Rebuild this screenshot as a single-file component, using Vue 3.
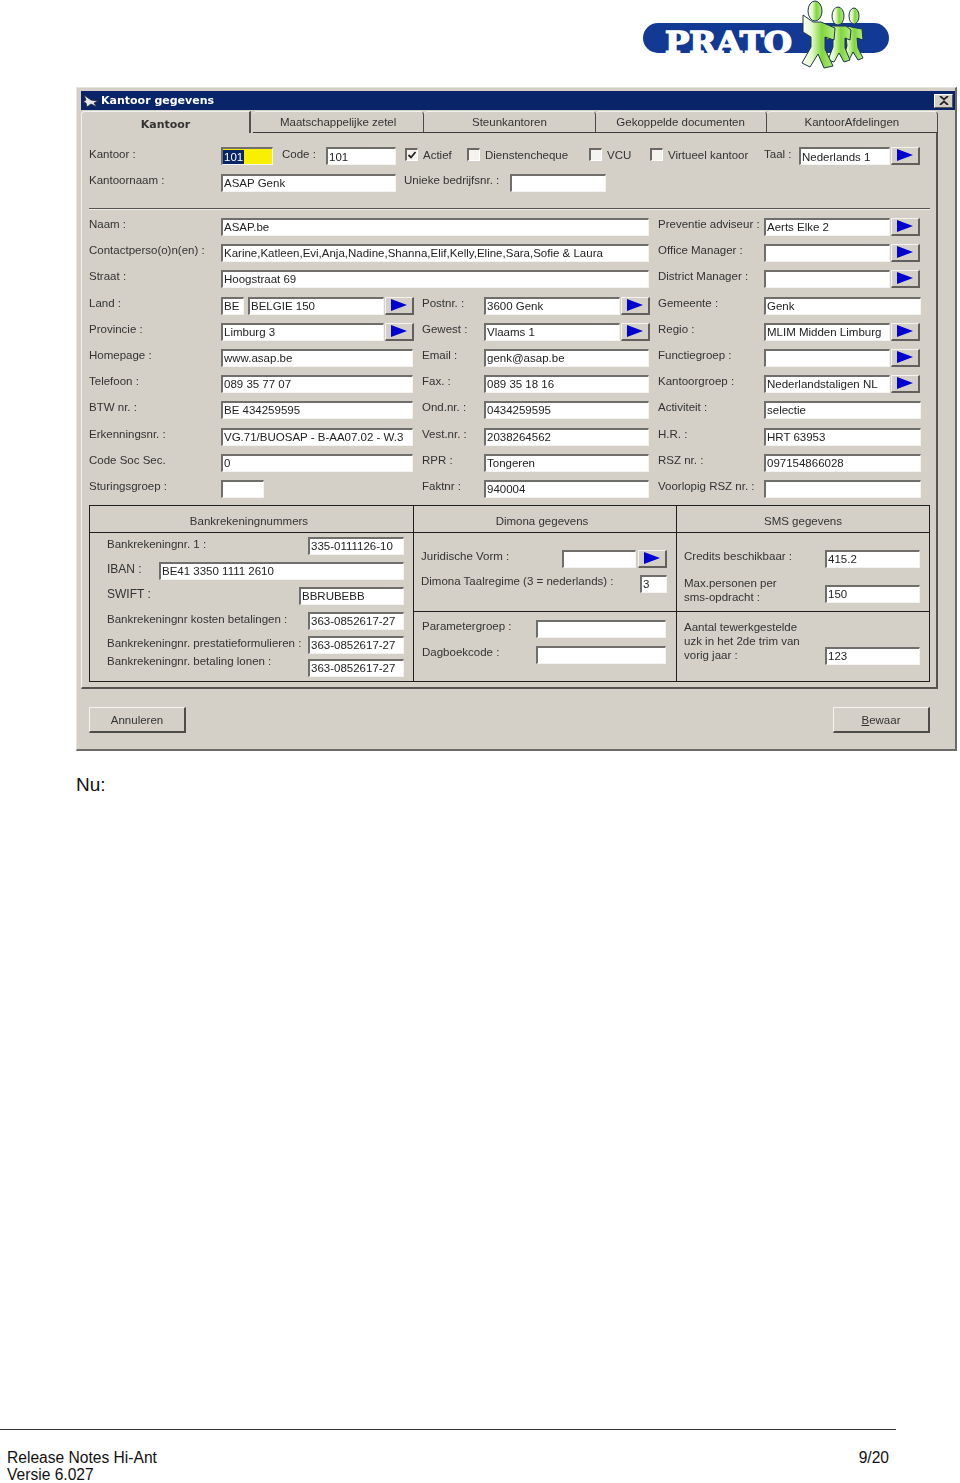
<script setup>
const tabs = ['Maatschappelijke zetel', 'Steunkantoren', 'Gekoppelde documenten', 'KantoorAfdelingen']

const checks = [
  { text: 'Actief', width: 62, on: true },
  { text: 'Dienstencheque', width: 122 },
  { text: 'VCU', width: 61 },
  { text: 'Virtueel kantoor', width: 114 },
]

const mainRows = [
  { a: 'Naam :', v: 'ASAP.be', w: 428, c: 'Preventie adviseur :', cv: 'Aerts Elke 2', arrow: true },
  { a: 'Contactperso(o)n(en) :', v: 'Karine,Katleen,Evi,Anja,Nadine,Shanna,Elif,Kelly,Eline,Sara,Sofie & Laura', w: 428, c: 'Office Manager :', cv: '', arrow: true },
  { a: 'Straat :', v: 'Hoogstraat 69', w: 428, c: 'District Manager :', cv: '', arrow: true },
  { a: 'Land :', land: true, b: 'Postnr. :', bv: '3600 Genk', barrow: true, c: 'Gemeente :', cv: 'Genk' },
  { a: 'Provincie :', v: 'Limburg 3', w: 163, varrow: true, b: 'Gewest :', bv: 'Vlaams 1', barrow: true, c: 'Regio :', cv: 'MLIM Midden Limburg', arrow: true },
  { a: 'Homepage :', v: 'www.asap.be', w: 192, b: 'Email :', bv: 'genk@asap.be', c: 'Functiegroep :', cv: '', arrow: true },
  { a: 'Telefoon :', v: '089 35 77 07', w: 192, b: 'Fax. :', bv: '089 35 18 16', c: 'Kantoorgroep :', cv: 'Nederlandstaligen NL', arrow: true },
  { a: 'BTW nr. :', v: 'BE 434259595', w: 192, b: 'Ond.nr. :', bv: '0434259595', c: 'Activiteit :', cv: 'selectie' },
  { a: 'Erkenningsnr. :', v: 'VG.71/BUOSAP - B-AA07.02 - W.3', w: 192, b: 'Vest.nr. :', bv: '2038264562', c: 'H.R. :', cv: 'HRT 63953' },
  { a: 'Code Soc Sec.', v: '0', w: 192, b: 'RPR :', bv: 'Tongeren', c: 'RSZ nr. :', cv: '097154866028' },
  { a: 'Sturingsgroep :', v: '', w: 43, b: 'Faktnr :', bv: '940004', c: 'Voorlopig RSZ nr. :', cv: '' },
]

const bankRows = [
  { label: 'Bankrekeningnr. 1 :', value: '335-0111126-10', width: 96, gap: 7 },
  { label: 'IBAN :', value: 'BE41 3350 1111 2610', width: 245, gap: 7, large: true },
  { label: 'SWIFT :', value: 'BBRUBEBB', width: 105, gap: 7, large: true },
  { label: 'Bankrekeningnr kosten betalingen :', value: '363-0852617-27', width: 96, gap: 6 },
  { label: 'Bankrekeningnr. prestatieformulieren :', value: '363-0852617-27', width: 96, gap: 5 },
  { label: 'Bankrekeningnr. betaling lonen :', value: '363-0852617-27', width: 96, gap: 0, raised: true },
]
</script>

<template>
  <div class="page">
    <header class="logo-row">
      <svg class="logo" width="248" height="70" viewBox="642 0 248 70" role="img" aria-label="Prato">
        <defs>
          <linearGradient id="paper" x1="0" x2="1" y1="0" y2="0">
            <stop offset="0" stop-color="#ffffff" />
            <stop offset=".3" stop-color="#e4f8c8" />
            <stop offset=".6" stop-color="#7fd63c" />
            <stop offset="1" stop-color="#b6ec84" />
          </linearGradient>
        </defs>
        <rect x="643" y="23" width="246" height="30" rx="15" fill="#123a94" />
        <text x="665" y="53" class="logo-text" textLength="127" lengthAdjust="spacingAndGlyphs">PRATO</text>
        <g fill="url(#paper)" stroke="#1d3550" stroke-width="1">
          <path d="M846 26l16 3 1 11-6-2 1 10 5 10-5 2-5-8-4 8-6-2 4-12-1-10-5 2 0-11z" />
          <ellipse cx="854" cy="16" rx="5" ry="8" />
          <path d="M826 26h20l5 4-1 10-5-2 0 10 5 12-6 2-5-9-5 9-6-2 5-13v-9l-6 2z" />
          <ellipse cx="838" cy="16" rx="6" ry="9" />
          <path d="M803 15l10 7h8l14 6-1 12-9-3v12l8 17-9 2-6-14-8 13-8-4 9-16v-10l-8-5z" />
          <ellipse cx="815" cy="11" rx="7" ry="10" />
        </g>
      </svg>
    </header>

    <section class="dialog">
      <div class="titlebar">
        <svg class="app-icon" width="16" height="14" viewBox="0 0 16 14">
          <path d="M1 1l7 5 7 1-4 2 3 4-6-3-4 3-1-4-3-1 3-2z" fill="#e8e8e8" stroke="#20242c" stroke-width=".8" />
        </svg>
        <span class="title">Kantoor gegevens</span>
        <button class="close" type="button" aria-label="Sluiten">
          <svg width="10" height="9" viewBox="0 0 10 9"><path d="M1 0l4 3.4L9 0M1 9l4-3.6L9 9" fill="none" stroke="#222" stroke-width="1.8" /></svg>
        </button>
      </div>

      <nav class="tabs">
        <div class="tab active">Kantoor</div>
        <div v-for="t in tabs" :key="t" class="tab">{{ t }}</div>
      </nav>

      <div class="panel">
        <div class="top-row first-row">
          <span class="lbl" style="width: 132px">Kantoor :</span>
          <span class="fld yellow" style="width: 52px"><mark>101</mark></span>
          <span class="lbl code" style="width: 53px">Code :</span>
          <span class="fld" style="width: 70px">101</span>
          <span class="spacer"></span>
          <label v-for="c in checks" :key="c.text" class="check" :style="{ width: c.width + 'px' }">
            <span class="box">
              <svg v-if="c.on" width="10" height="10" viewBox="0 0 10 10"><path d="M1.5 5l2.5 2.5L8.5 2" fill="none" stroke="#222" stroke-width="1.8" /></svg>
            </span>
            <span class="lbl check-text">{{ c.text }}</span>
          </label>
          <span class="lbl" style="width: 35px">Taal :</span>
          <span class="fld" style="width: 91px">Nederlands 1</span>
          <button class="arrow" type="button"><svg width="16" height="12" viewBox="0 0 16 12"><path d="M0 0l16 6L0 12z" fill="#0000d0" /></svg></button>
        </div>

        <div class="top-row second">
          <span class="lbl" style="width: 132px">Kantoornaam :</span>
          <span class="fld" style="width: 175px">ASAP Genk</span>
          <span class="lbl unique">Unieke bedrijfsnr. :</span>
          <span class="fld" style="width: 96px"></span>
        </div>

        <hr class="sep" />

        <div class="main-grid">
          <template v-for="r in mainRows" :key="r.a">
            <span class="lbl">{{ r.a }}</span>
            <div class="cell" :class="{ wide: r.w === 428 }">
              <template v-if="r.land">
                <span class="fld" style="width: 23px">BE</span>
                <span class="fld land" style="width: 136px">BELGIE 150</span>
                <button class="arrow" type="button"><svg width="16" height="12" viewBox="0 0 16 12"><path d="M0 0l16 6L0 12z" fill="#0000d0" /></svg></button>
              </template>
              <template v-else>
                <span class="fld" :style="{ width: r.w + 'px' }">{{ r.v }}</span>
                <button v-if="r.varrow" class="arrow" type="button"><svg width="16" height="12" viewBox="0 0 16 12"><path d="M0 0l16 6L0 12z" fill="#0000d0" /></svg></button>
              </template>
            </div>
            <template v-if="r.b">
              <span class="lbl">{{ r.b }}</span>
              <div class="cell">
                <span class="fld" :style="{ width: r.barrow ? '136px' : '165px' }">{{ r.bv }}</span>
                <button v-if="r.barrow" class="arrow" type="button"><svg width="16" height="12" viewBox="0 0 16 12"><path d="M0 0l16 6L0 12z" fill="#0000d0" /></svg></button>
              </div>
            </template>
            <span class="lbl">{{ r.c }}</span>
            <div class="cell">
              <span class="fld" :style="{ width: r.arrow ? '126px' : '157px' }">{{ r.cv }}</span>
              <button v-if="r.arrow" class="arrow" type="button"><svg width="16" height="12" viewBox="0 0 16 12"><path d="M0 0l16 6L0 12z" fill="#0000d0" /></svg></button>
            </div>
          </template>
        </div>

        <div class="group">
          <div class="g-head bank-head">Bankrekeningnummers</div>
          <div class="g-head mid">Dimona gegevens</div>
          <div class="g-head">SMS gegevens</div>

          <div class="bank">
            <div v-for="b in bankRows" :key="b.label" class="bank-row" :style="{ marginBottom: b.gap + 'px' }">
              <span class="lbl" :class="{ large: b.large, raised: b.raised }">{{ b.label }}</span>
              <span class="fld" :style="{ width: b.width + 'px' }">{{ b.value }}</span>
            </div>
          </div>

          <div class="mid-col">
            <div class="sub first">
              <div class="sub-row">
                <span class="lbl grow">Juridische Vorm :</span>
                <span class="fld" style="width: 74px"></span>
                <button class="arrow" type="button"><svg width="16" height="12" viewBox="0 0 16 12"><path d="M0 0l16 6L0 12z" fill="#0000d0" /></svg></button>
              </div>
              <div class="sub-row">
                <span class="lbl grow">Dimona Taalregime (3 = nederlands) :</span>
                <span class="fld" style="width: 27px">3</span>
              </div>
            </div>
            <div class="sub lower">
              <div class="sub-row">
                <span class="lbl grow">Parametergroep :</span>
                <span class="fld" style="width: 130px"></span>
              </div>
              <div class="sub-row">
                <span class="lbl grow">Dagboekcode :</span>
                <span class="fld" style="width: 130px"></span>
              </div>
            </div>
          </div>

          <div class="mid-col sms">
            <div class="sub first">
              <div class="sub-row">
                <span class="lbl grow">Credits beschikbaar :</span>
                <span class="fld" style="width: 95px">415.2</span>
              </div>
              <div class="sub-row two">
                <span class="lbl grow tight">Max.personen per<br />sms-opdracht :</span>
                <span class="fld" style="width: 95px">150</span>
              </div>
            </div>
            <div class="sub lower">
              <div class="sub-row three">
                <span class="lbl grow tight">Aantal tewerkgestelde<br />uzk in het 2de trim van<br />vorig jaar :</span>
                <span class="fld" style="width: 95px">123</span>
              </div>
            </div>
          </div>
        </div>
      </div>

      <div class="actions">
        <button class="btn" type="button">Annuleren</button>
        <button class="btn" type="button"><u>B</u>ewaar</button>
      </div>
    </section>

    <p class="nu">Nu:</p>

    <footer class="footer">
      <div class="foot-line">
        <span>Release Notes Hi-Ant</span>
        <span>9/20</span>
      </div>
      <div>Versie 6.027</div>
    </footer>
  </div>
</template>

<style scoped>
* { box-sizing: border-box; }

.page {
  width: 960px;
  height: 1483px;
  background: #fff;
  display: flex;
  flex-direction: column;
  overflow: hidden;
  font-family: "Liberation Sans", Arial, sans-serif;
  color: #000;
}

.logo-row {
  height: 87px;
  padding-left: 642px;
}
.logo { display: block; }
.logo-text {
  font-family: "DejaVu Serif", serif;
  font-weight: 700;
  font-size: 29px;
  fill: #fff;
  stroke: #fff;
  stroke-width: 1.5px;
}

.dialog {
  width: 881px;
  height: 664px;
  margin-left: 76px;
  padding: 3px 0 0 4px;
  background: #d4d0c8;
  border: 1px solid #e6e4df;
  border-right: 2px solid #6a6a68;
  border-bottom: 2px solid #6a6a68;
  filter: blur(0.35px);
  font-size: 11.5px;
  color: #333;
}

.titlebar {
  height: 19px;
  background: #0a246a;
  display: flex;
  align-items: center;
  padding: 0 2px;
  color: #fff;
}
.app-icon { margin-right: 2px; }
.title {
  font-family: "DejaVu Sans", sans-serif;
  font-weight: 700;
  font-size: 11px;
}
.close {
  margin-left: auto;
  width: 19px;
  height: 14px;
  padding: 0;
  display: flex;
  align-items: center;
  justify-content: center;
  background: #d4d0c8;
  border: 1px solid;
  border-color: #fff #555 #555 #fff;
}

.tabs {
  display: flex;
  width: 857px;
  height: 22px;
  margin-top: 1px;
}
.tab {
  flex: 0 0 171.25px;
  height: 22px;
  text-align: center;
  line-height: 20px;
  border-style: solid;
  border-color: #f2f2f0 #4a4a48 #3a3a38 transparent;
  border-width: 1px 1px 1px 0;
  border-radius: 4px 4px 0 0;
}
.tab.active {
  flex-basis: 170px;
  height: 22px;
  margin-right: 2px;
  padding-top: 3px;
  border: 0;
  border-top: 1px solid #f2f2f0;
  border-left: 1px solid #f2f2f0;
  border-right: 2px solid #55534f;
  border-radius: 4px 0 0 0;
  font-family: "DejaVu Sans", sans-serif;
  font-weight: 700;
  font-size: 11px;
  background: #d4d0c8;
}

.panel {
  width: 857px;
  height: 556px;
  padding: 14px 7px 0 7px;
  border-left: 1px solid #f2f2f0;
  border-right: 2px solid #55534f;
  border-bottom: 2px solid #55534f;
}

.lbl {
  display: block;
  line-height: 13px;
  white-space: nowrap;
}

.fld {
  display: block;
  flex: none;
  height: 18px;
  padding: 0 0 0 1px;
  background: #fff;
  border: 2px solid;
  border-color: #706e6a #f4f3f0 #f4f3f0 #706e6a;
  border-bottom-width: 1px;
  border-right-width: 1px;
  line-height: 15px;
  white-space: nowrap;
  overflow: hidden;
  color: #222;
}
.fld.yellow {
  background: #f8f000;
  padding-left: 0;
}
.fld mark {
  background: #0a246a;
  color: #fff;
  display: inline-block;
  line-height: 14px;
  padding: 0 1px;
}
.fld.land { margin-left: 4px; }

.arrow {
  flex: none;
  width: 29px;
  height: 18px;
  margin-left: 1px;
  padding: 0 0 1px;
  display: flex;
  align-items: center;
  justify-content: center;
  background: #d4d0c8;
  border: 1px solid;
  border-color: #f4f3f0 #62605c #62605c #f4f3f0;
  border-bottom-width: 2px;
  border-right-width: 2px;
}

.top-row {
  display: flex;
  align-items: flex-start;
  height: 18px;
}
.top-row.second { margin-top: 9px; }
.first-row .lbl { padding-top: 1px; }
.first-row .fld { padding-top: 1px; }
.first-row .check-text { padding-top: 1px; }
.code { padding-left: 9px; }
.spacer { width: 9px; flex: none; }
.check {
  display: flex;
  align-items: flex-start;
  flex: none;
  padding-top: 1px;
}
.box {
  flex: none;
  width: 13px;
  height: 13px;
  margin-right: 5px;
  display: flex;
  align-items: center;
  justify-content: center;
  background: #f4f3f0;
  border: 1px solid;
  border-color: #6a6864 #fff #fff #6a6864;
  border-width: 2px 1px 1px 2px;
}
.unique {
  width: 106px;
  margin-left: 8px;
}

.sep {
  width: 841px;
  height: 2px;
  margin: 16px 0 8px;
  padding: 0;
  border: 0;
  border-top: 1px solid #55534f;
  border-bottom: 1px solid #efeeea;
}

.main-grid {
  display: grid;
  grid-template-columns: 132px 201px 62px 174px 106px 157px;
  grid-auto-rows: 18px;
  row-gap: 8.2px;
  width: 841px;
}
.cell { display: flex; }
.cell.wide { grid-column: span 3; }

.group {
  display: grid;
  grid-template-columns: 323px 264px 1fr;
  grid-template-rows: 27px 1fr;
  width: 841px;
  height: 177px;
  margin-top: 7px;
  border: 1px solid #1f1f1f;
}
.g-head {
  height: 27px;
  text-align: center;
  line-height: 31px;
  border-bottom: 1px solid #1f1f1f;
}
.g-head.bank-head { padding-right: 5px; }
.g-head.mid { padding-right: 6px; }
.g-head.mid,
.mid-col { border-left: 1px solid #1f1f1f; border-right: 1px solid #1f1f1f; }
.mid-col.sms { border: 0; }

.bank { padding: 4px 9px 0 17px; }
.bank-row {
  display: flex;
  justify-content: space-between;
  height: 18px;
}
.bank-row .lbl { padding-top: 1px; }
.lbl.large { font-size: 12px; }
.lbl.raised { margin-top: -5px; }

.mid-col {
  display: flex;
  flex-direction: column;
}
.sub { padding: 0 9px 0 7px; }
.sub.first {
  height: 79px;
  padding-top: 17px;
  border-bottom: 1px solid #1f1f1f;
}
.sub.lower { padding-top: 8px; padding-left: 8px; padding-right: 10px; }
.sub-row {
  display: flex;
  align-items: flex-start;
  height: 18px;
  margin-bottom: 8px;
}
.mid-col:not(.sms) .sub-row .arrow { margin-left: 2px; }
.mid-col:not(.sms) .sub.first .sub-row:first-child { margin-bottom: 7px; }
.grow { flex: 1; min-width: 0; }
.sms .sub,
.sms .sub.lower { padding-right: 9px; }
.sms .sub.first,
.sms .sub.lower { padding-left: 7px; }
.sms .sub.first .sub-row:first-child { margin-bottom: 17px; }
.tight { line-height: 14px; }
.sub-row.two .tight { margin-top: -9px; }
.sub-row.three { margin-top: 27px; }
.sub-row.three .tight { margin-top: -27px; }

.actions {
  display: flex;
  justify-content: space-between;
  width: 841px;
  margin: 18px 0 0 8px;
}
.btn {
  width: 97px;
  height: 26px;
  padding: 0;
  background: #d4d0c8;
  border: 1px solid;
  border-color: #f4f3f0 #4e4c48 #4e4c48 #f4f3f0;
  border-width: 1px 2px 2px 1px;
  font: inherit;
  color: #333;
}

.nu {
  margin: 23px 0 0 76px;
  font-size: 19px;
  line-height: 21px;
  color: #111;
}

.footer {
  margin-top: auto;
  width: 896px;
  height: 54px;
  border-top: 1px solid #333;
  padding: 19px 7px 0 7px;
  font-size: 15.6px;
  line-height: 17px;
  color: #111;
}
.foot-line {
  display: flex;
  justify-content: space-between;
}
</style>
